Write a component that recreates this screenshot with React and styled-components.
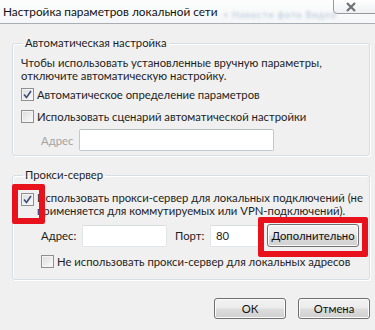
import React from "react";
import styled, { createGlobalStyle } from "styled-components";

const Global = createGlobalStyle`
  body {
    margin: 0;
    background: #f0f0f0;
    font-family: Lato, "Open Sans", sans-serif;
    font-size: 11.3px;
    color: #1e1e1e;
    white-space: nowrap;
  }
`;

const Window = styled.div`
  width: 375px;
  height: 330px;
  overflow: hidden;
  background: #f0f0f0;
  display: flex;
  flex-direction: column;
`;

const TitleBar = styled.div`
  height: 23px;
  flex: none;
  position: relative;
  display: flex;
  align-items: center;
  padding-left: 3px;
  background: linear-gradient(#fdfdfd, #f4f6f8);
  border-bottom: 1px solid #a8aeb4;
  font-size: 11.8px;
  color: #111;
`;

const Ghost = styled.span`
  position: absolute;
  left: 224px;
  top: 9px;
  color: #7f9ab8;
  font-size: 9px;
  filter: blur(1.4px);
  opacity: 0.6;
  letter-spacing: 1px;
`;

const CloseBtn = styled.div`
  position: absolute;
  left: 333px;
  top: -1px;
  width: 46px;
  height: 15px;
  border: 1px solid #9a9a9a;
  border-radius: 0 0 0 4px;
  background: linear-gradient(#ffffff, #eef0f2);
  display: flex;
  align-items: center;
  justify-content: center;
  padding-right: 10px;
  box-sizing: border-box;
`;

const Body = styled.div`
  flex: 1;
  position: relative;
  padding: 12px 5px 0 12px;
  display: flex;
  flex-direction: column;
`;

const Group = styled.fieldset`
  margin: 0;
  padding: ${(p) => p.$pad};
  border: 1px solid #d5dfe5;
  border-radius: 3px;
  box-shadow: inset 1px 1px 0 #fff, 1px 1px 0 #fff;
  height: ${(p) => p.$h}px;
  box-sizing: border-box;
  display: flex;
  flex-direction: column;
  & + & {
    margin-top: 12px;
  }
  legend {
    padding: 0 2px;
    margin-left: 4px;
    line-height: 14px;
    color: #1e1e1e;
  }
`;

const Text = styled.div`
  line-height: 13px;
  padding-left: 2px;
`;

const CheckRow = styled.div`
  display: flex;
  align-items: ${(p) => (p.$top ? "flex-start" : "center")};
  gap: 3px;
  margin-top: ${(p) => p.$mt || 0}px;
  margin-left: ${(p) => p.$ml || 0}px;
  line-height: 13px;
`;

const Box = styled.span`
  width: 13px;
  height: 13px;
  flex: none;
  box-sizing: border-box;
  border: 1px solid #8e8f8f;
  background: linear-gradient(135deg, #dcdcdc, #fbfbfb);
  box-shadow: inset 0 0 0 1px #f4f4f4;
  display: flex;
  align-items: center;
  justify-content: center;
  margin-top: ${(p) => (p.$top ? "2px" : "0")};
`;

const FieldRow = styled.div`
  display: flex;
  align-items: center;
  margin-top: ${(p) => p.$mt || 0}px;
  margin-left: ${(p) => p.$ml || 0}px;
`;

const Label = styled.span`
  color: ${(p) => (p.$dim ? "#a3a3a3" : "#1e1e1e")};
  width: ${(p) => p.$w}px;
  margin-left: ${(p) => p.$ml || 0}px;
  flex: none;
`;

const Input = styled.div`
  width: ${(p) => p.$w}px;
  height: ${(p) => p.$h || 22}px;
  box-sizing: border-box;
  background: #fff;
  border: 1px solid ${(p) => (p.$dim ? "#c4c8cc" : "#e2e6ea")};
  border-top-color: ${(p) => (p.$dim ? "#b8bcc0" : "#d8dcdf")};
  border-radius: 2px;
  padding-left: 5px;
  display: flex;
  align-items: center;
  flex: none;
`;

const Button = styled.div`
  width: ${(p) => p.$w}px;
  height: ${(p) => p.$h || 21}px;
  margin-left: ${(p) => p.$ml || 0}px;
  box-sizing: border-box;
  border: 1px solid #707070;
  border-radius: 3px;
  background: linear-gradient(#f2f2f2 0%, #ebebeb 48%, #dddddd 52%, #cfcfcf 100%);
  box-shadow: inset 0 0 0 1px #fbfbfb;
  display: flex;
  align-items: center;
  justify-content: center;
  flex: none;
  color: #111;
`;

const Footer = styled.div`
  display: flex;
  justify-content: flex-end;
  gap: 12px;
  margin-top: 18px;
`;

const Mark = styled.div`
  position: absolute;
  left: ${(p) => p.$x}px;
  top: ${(p) => p.$y}px;
  width: ${(p) => p.$w}px;
  height: ${(p) => p.$h}px;
  box-sizing: border-box;
  border: 6px solid #e8121c;
  border-radius: 2px;
  pointer-events: none;
`;

const Tick = () => (
  <svg width="9" height="9" viewBox="0 0 9 9">
    <path d="M1 4.5 L3.5 7.5 L8 1" fill="none" stroke="#3c4c78" strokeWidth="1.6" />
  </svg>
);

const Check = ({ on, top }) => <Box $top={top}>{on && <Tick />}</Box>;

export default function App() {
  return (
    <Window>
      <Global />
      <TitleBar>
        Настройка параметров локальной сети
        <Ghost>▪ Новости фото Видео</Ghost>
        <CloseBtn>
          <svg width="12" height="10" viewBox="0 0 12 10">
            <path d="M2 1 L10 9 M10 1 L2 9" stroke="#6f7275" strokeWidth="2.2" />
          </svg>
        </CloseBtn>
      </TitleBar>
      <Body>
        <Group $h={120} $pad="6px 6px 0 6px">
          <legend>Автоматическая настройка</legend>
          <Text>
            Чтобы использовать установленные вручную параметры,
            <br />
            отключите автоматическую настройку.
          </Text>
          <CheckRow $mt={6} $ml={2}>
            <Check on />
            Автоматическое определение параметров
          </CheckRow>
          <CheckRow $mt={9} $ml={2}>
            <Check />
            Использовать сценарий автоматической настройки
          </CheckRow>
          <FieldRow $mt={6} $ml={22}>
            <Label $dim $w={38}>Адрес</Label>
            <Input $dim $w={195} />
          </FieldRow>
        </Group>
        <Group $h={112} $pad="9px 6px 0 6px">
          <legend>Прокси-сервер</legend>
          <CheckRow $top $ml={2}>
            <Check on top />
            <span>
              Использовать прокси-сервер для локальных подключений (не
              <br />
              применяется для коммутируемых или VPN-подключений).
            </span>
          </CheckRow>
          <FieldRow $mt={7} $ml={22}>
            <Label $w={41}>Адрес:</Label>
            <Input $w={85} />
            <Label $w={35} $ml={8}>Порт:</Label>
            <Input $w={52}>80</Input>
            <Button $w={92} $h={23} $ml={5}>Дополнительно</Button>
          </FieldRow>
          <CheckRow $mt={8} $ml={22}>
            <Check />
            Не использовать прокси-сервер для локальных адресов
          </CheckRow>
        </Group>
        <Footer>
          <Button $w={72}>ОК</Button>
          <Button $w={72}>Отмена</Button>
        </Footer>
        <Mark $x={12} $y={160} $w={33} $h={40} />
        <Mark $x={258} $y={193} $w={110} $h={40} />
      </Body>
    </Window>
  );
}
